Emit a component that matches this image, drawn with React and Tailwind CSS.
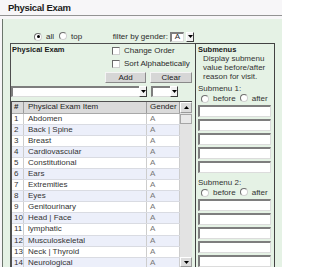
import React from "react";

function Radio({ checked }) {
  return (
    <span className="inline-flex shrink-0 w-[8px] h-[8px] rounded-full bg-white border border-t-[#6f6f6f] border-l-[#6f6f6f] border-b-[#d0d0d0] border-r-[#d0d0d0] items-center justify-center">
      {checked && <span className="w-[3px] h-[3px] rounded-full bg-black" />}
    </span>
  );
}

function Check() {
  return (
    <span className="inline-block shrink-0 w-[8px] h-[8px] bg-white border border-t-[#6a6a6a] border-l-[#6a6a6a] border-b-[#cfcfcf] border-r-[#cfcfcf]" />
  );
}

function Arrow({ up }) {
  return (
    <span className="flex shrink-0 items-center justify-center w-[8px] h-full bg-[#f2f2f2] border-r border-b border-[#3c3c3c] border-t border-t-white border-l border-l-white">
      <svg width="5" height="3" viewBox="0 0 5 3">
        <path d={up ? "M0 3H5L2.5 0Z" : "M0 0H5L2.5 3Z"} fill="#000" />
      </svg>
    </span>
  );
}

function Btn({ children, w }) {
  return (
    <div
      className={`${w} h-[11px] flex items-center justify-center bg-[#d6d6d6] border-t border-l border-t-[#f4f4f4] border-l-[#f4f4f4] border-b border-r border-b-[#8a8a8a] border-r-[#8a8a8a] text-[#222]`}
    >
      {children}
    </div>
  );
}

function Field({ w }) {
  return (
    <div className={`${w} h-[12px] mb-[2px] ml-[2px] bg-white border-t-2 border-l-2 border-t-[#7e7e7e] border-l-[#7e7e7e] border-b border-r border-b-[#dcdcdc] border-r-[#dcdcdc]`} />
  );
}

function Group({ label, top }) {
  return (
    <div className={`${top} flex flex-col`}>
      <div className="h-[9px] flex items-center pl-[2px]">{label}</div>
      <div className="h-[11px] flex items-center pl-[5px]">
        <Radio />
        <span className="ml-[4px]">before</span>
        <span className="ml-[4px]">
          <Radio />
        </span>
        <span className="ml-[4px]">after</span>
      </div>
      <Field w="w-[73px]" />
      <Field w="w-[73px]" />
      <Field w="w-[73px]" />
      <Field w="w-[73px]" />
      <Field w="w-[73px]" />
    </div>
  );
}

export default function App() {
  const items = [
    "Abdomen",
    "Back | Spine",
    "Breast",
    "Cardiovascular",
    "Constitutional",
    "Ears",
    "Extremities",
    "Eyes",
    "Genitourinary",
    "Head | Face",
    "lymphatic",
    "Musculoskeletal",
    "Neck | Thyroid",
    "Neurological",
  ];
  return (
    <div className="w-[282px] h-[267px] overflow-hidden bg-[#f7f6f8] font-['Liberation_Sans',Arial,sans-serif] text-[#2a2a2a] text-[8px] leading-none">
      <div className="h-[16px] border-b border-[#939393] flex items-center pl-[8px]">
        <span className="text-[9.5px] font-bold tracking-[-0.3px] text-[#1c1c1c]">
          Physical Exam
        </span>
      </div>
      <div className="h-[3px]" />
      <div className="ml-[2px] h-[248px] border-l border-[#6c766c] bg-[#e5f2e5] flex flex-col">
        {/* radios + filter */}
        <div className="mt-[12px] ml-[7px] w-[185px] h-[11px] flex items-center">
          <div className="pl-[24px] flex items-center">
            <Radio checked />
            <span className="ml-[4px]">all</span>
            <span className="ml-[5px]">
              <Radio />
            </span>
            <span className="ml-[4px]">top</span>
          </div>
          <div className="ml-auto pr-[1px] flex items-center h-full">
            <span>filter by gender:</span>
            <div className="ml-[2px] w-[14px] h-[10px] bg-white border-t-2 border-l-2 border-t-[#7e7e7e] border-l-[#7e7e7e] border-b border-r border-b-[#dcdcdc] border-r-[#dcdcdc] flex items-center justify-center">
              A
            </div>
            <div className="ml-[2px] h-[10px] flex">
              <Arrow />
            </div>
          </div>
        </div>

        <div className="mt-[1px] ml-[7px] flex flex-1 min-h-0">
          {/* left panel */}
          <div className="w-[185px] border-l border-t border-[#4e4e4e] flex flex-col min-h-0">
            <div className="flex">
              <div className="flex-1 pl-[1px] pt-[1.5px] font-bold text-[7.5px] text-[#1a1a1a]">
                Physical Exam
              </div>
              <div className="w-[88px] mr-[2px] pt-[1px] flex flex-col">
                <div className="h-[12px] flex items-center pl-[7px]">
                  <Check />
                  <span className="ml-[4px]">Change Order</span>
                </div>
                <div className="h-[13px] flex items-center pl-[7px]">
                  <Check />
                  <span className="ml-[4px]">Sort Alphabetically</span>
                </div>
                <div className="mt-[2px] flex gap-[4px]">
                  <Btn w="w-[41px]">Add</Btn>
                  <Btn w="w-[42px]">Clear</Btn>
                </div>
              </div>
            </div>

            <div className="mt-[3px] h-[11px] flex">
              <div className="w-[128px] h-full bg-white border-t-2 border-l-2 border-t-[#7e7e7e] border-l-[#7e7e7e] border-b border-b-[#dcdcdc]" />
              <Arrow />
              <div className="ml-[4px] w-[19px] h-full bg-white border-t-2 border-l-2 border-t-[#7e7e7e] border-l-[#7e7e7e] border-b border-b-[#dcdcdc]" />
              <Arrow />
            </div>

            <div className="mt-[4px] flex flex-1 min-h-0">
              <div className="w-[169px] border-t border-l border-[#505050] bg-white flex flex-col overflow-hidden">
                <div className="h-[11.5px] shrink-0 grid grid-cols-[12px_123px_33px] bg-[#dadada] border-b border-[#a8a8a8] text-[#1e1e1e]">
                  <div className="flex items-center pl-[2px] font-bold border-r border-[#9c9c9c]">#</div>
                  <div className="flex items-center pl-[4px] border-r border-[#9c9c9c]">Physical Exam Item</div>
                  <div className="flex items-center pl-[3px] border-r border-[#9c9c9c]">Gender</div>
                </div>
                {items.map((it, i) => (
                  <div
                    key={it}
                    className={`h-[11.1px] shrink-0 grid grid-cols-[12px_123px_33px] border-b border-[#d9dbe2] ${
                      i % 2 === 1 ? "bg-[#eceffa]" : "bg-white"
                    }`}
                  >
                    <div className="flex items-center pl-[2px] border-r border-[#cdcdcd] text-[#333]">{i + 1}</div>
                    <div className="flex items-center pl-[4px] border-r border-[#cdcdcd] text-[#333]">{it}</div>
                    <div className="flex items-center pl-[3px] border-r border-[#cdcdcd] text-[#777]">A</div>
                  </div>
                ))}
              </div>
              <div className="w-[12px] border-t border-[#505050] bg-[#e3e3e3] flex flex-col">
                <div className="h-[11px] flex items-center justify-center bg-[#dcdcdc] border-b border-r border-[#9a9a9a] border-t border-t-white border-l border-l-white">
                  <svg width="5" height="3" viewBox="0 0 5 3">
                    <path d="M0 3H5L2.5 0Z" fill="#000" />
                  </svg>
                </div>
                <div className="h-[10px] mt-[1px] bg-[#e9e9e9] border border-[#a6a6a6]" />
                <div className="mt-auto h-[10px] flex items-center justify-center bg-[#dcdcdc] border-b border-r border-[#9a9a9a] border-t border-t-white border-l border-l-white">
                  <svg width="5" height="3" viewBox="0 0 5 3">
                    <path d="M0 0H5L2.5 3Z" fill="#000" />
                  </svg>
                </div>
              </div>
            </div>
          </div>

          {/* submenus */}
          <div className="w-[80px] border-l border-t border-r border-[#424242] flex flex-col text-[#333]">
            <div className="h-[10px] pl-[2px] pt-[1.5px] font-bold text-[7.5px] text-[#1a1a1a]">
              Submenus
            </div>
            <div className="mt-[1px] pl-[7px] leading-[9px] whitespace-nowrap">
              <div>Display submenu</div>
              <div>value before/after</div>
              <div>reason for visit.</div>
            </div>
            <Group label="Submenu 1:" top="mt-[3.5px]" />
            <Group label="Submenu 2:" top="mt-[4px]" />
          </div>
        </div>
      </div>
    </div>
  );
}
